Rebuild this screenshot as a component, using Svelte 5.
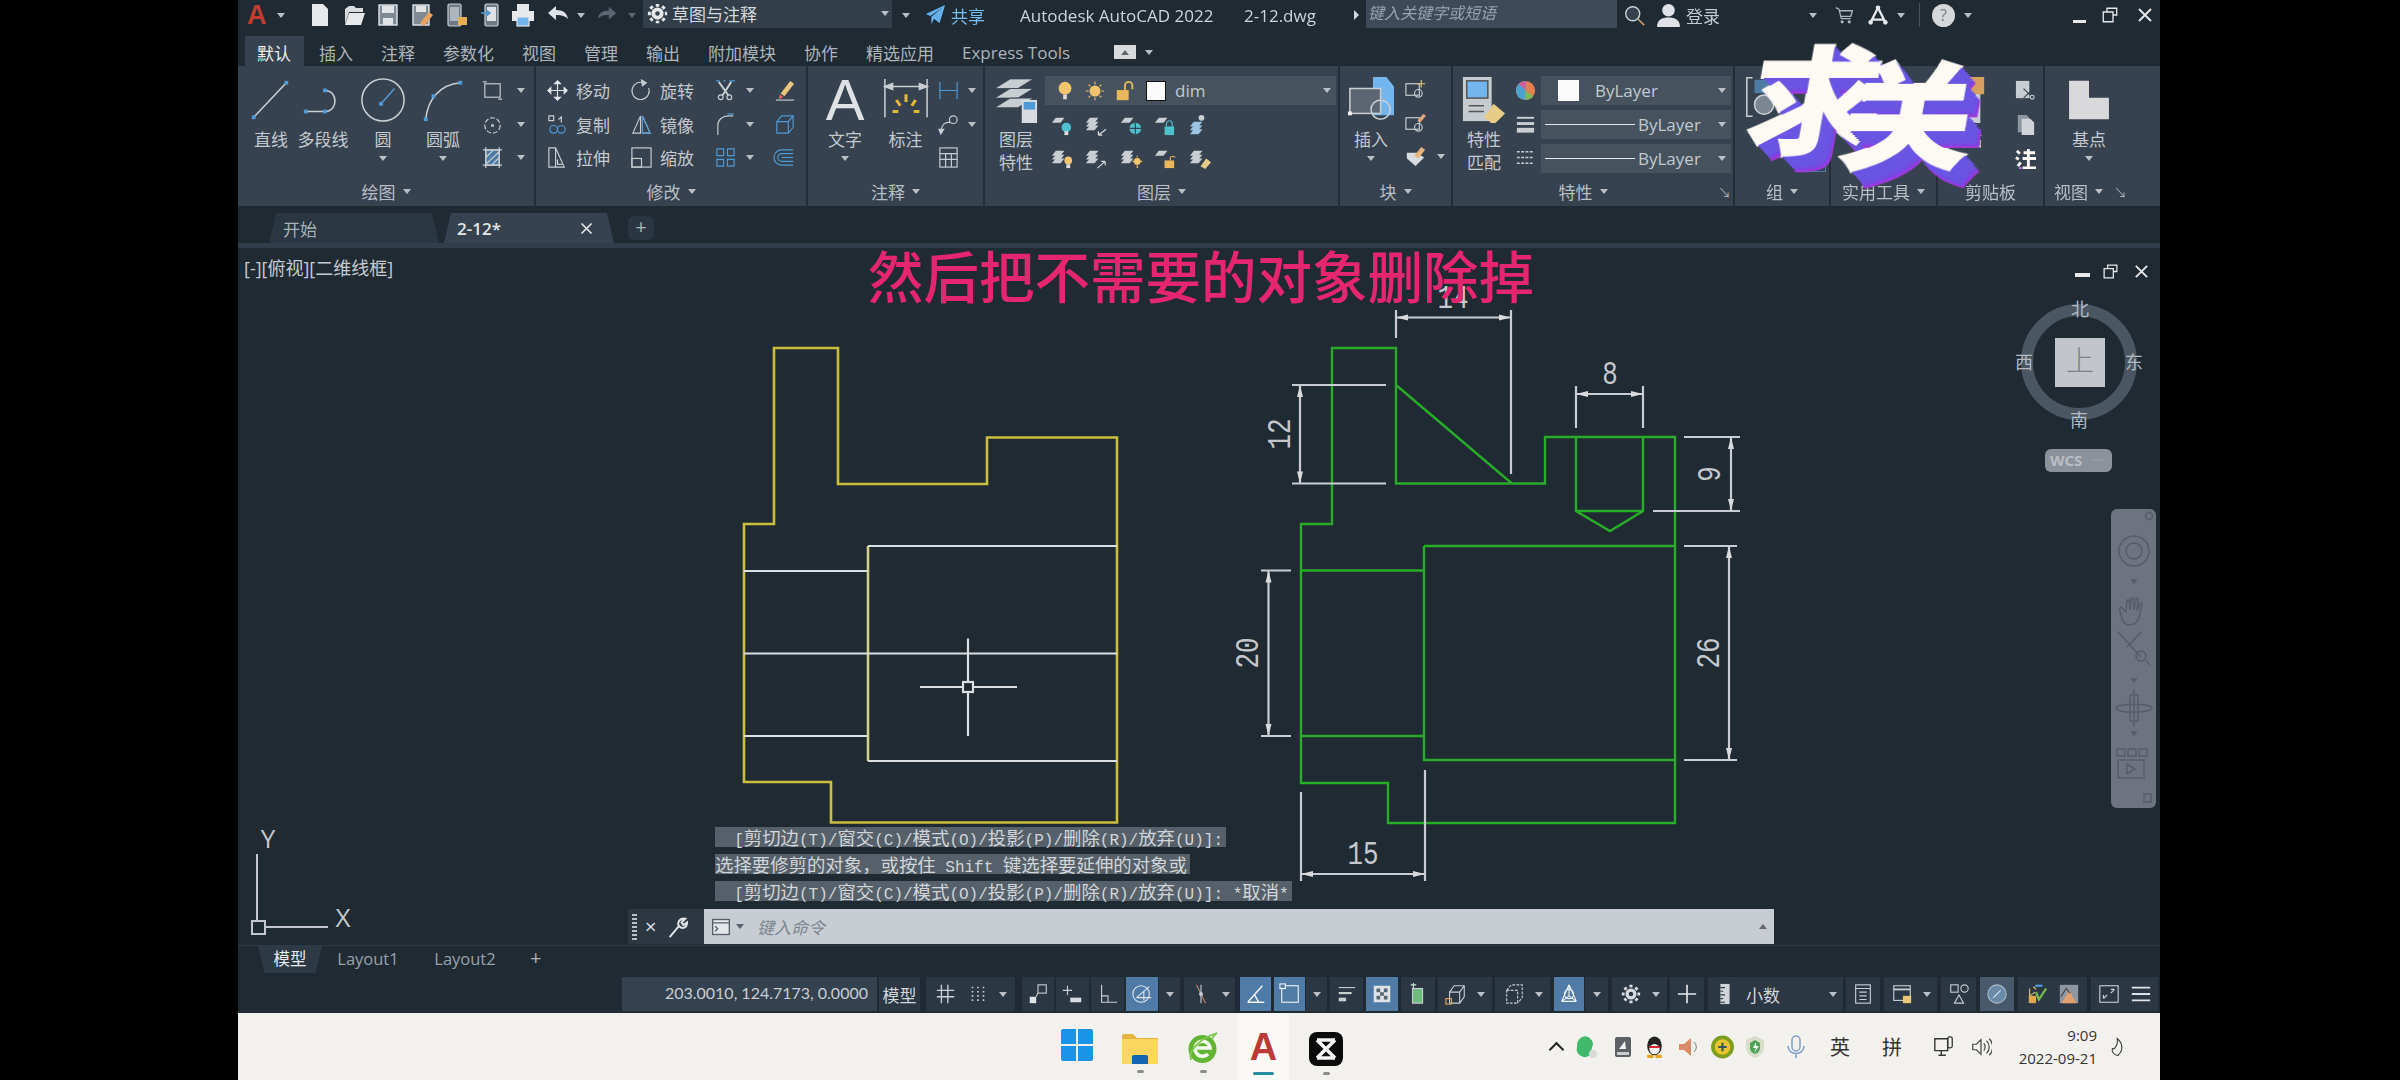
<script>
  const b = '#4e9ad6';
  const sq = (x, y) => `<rect x="${x - 1}" y="${y - 1}" width="2" height="2" fill="${b}" stroke="none"/>`;
  const plate = (y, f = '#c9ced3') => `<path d="M1 ${y + 5}l4-5h9l-4 5z" fill="${f}" stroke="none"/>`;
  const stack = plate(4) + plate(8) + plate(12);

  const icons = {
    line: `<path d="M3 21 20 3"/>` + sq(3, 21) + sq(20, 3),
    pline: `<path d="M3 18H13M13 7c7 0 7 11 0 11"/>` + sq(3, 18) + sq(13, 18) + sq(13, 7),
    circ: `<circle cx="12" cy="12" r="11"/><path d="M11 14 18 6" stroke="${b}"/>` + sq(11, 14),
    arc: `<path d="M3 22C4 12 10 4 21 3"/>` + sq(3, 22) + sq(7, 10) + sq(21, 3),
    rect: `<rect x="4" y="5" width="16" height="14"/><path d="M2 3h4M18 21h4"/>`,
    poly: `<circle cx="12" cy="13" r="8" stroke-dasharray="5 2"/><circle cx="12" cy="13" r="1"/>`,
    hatch: `<rect x="5" y="4" width="14" height="16" fill="#4e7ba3"/><path d="M5 12 13 4M5 19 19 6M11 20 19 12M2 4h20M2 20h20M5 1v22M19 1v22"/>`,
    move: `<path d="M12 2v20M2 12h20M12 2 9 5h6zM12 22l-3-3h6zM2 12l3-3v6zM22 12l-3-3v6z" stroke="#e4e7ea" fill="#e4e7ea"/>`,
    rotate: `<path d="M15 4a9 9 0 1 0 5 8" transform="rotate(-20 12 12)"/><path d="M12 1l5 3-4 3z" fill="#c9ced3"/>`,
    trim: `<path d="M5 3 15 17M18 3 9 17" stroke-width="2"/><circle cx="7" cy="19" r="2.5"/><circle cx="16" cy="19" r="2.5"/><path d="M2 2h4M10 2h2M16 2h6" stroke="${b}"/>`,
    erase: `<path d="M8 15 18 2l4 3-10 13z" fill="#e9c67a" stroke="none"/><path d="M7 16l4 3-5 2z" fill="#d66" stroke="none"/><path d="M3 22h19"/>`,
    copy: `<path d="M3 3h5v5H3zM13 7l3-3v6" /><circle cx="8" cy="17" r="4" stroke="${b}"/><circle cx="16" cy="17" r="4" stroke="${b}"/>`,
    mirror: `<path d="M11 3 3 21h8zM13 3v18h8z" /><path d="M13 3l8 18h-8z" stroke="${b}"/>`,
    fillet: `<path d="M4 23V13C4 7 9 3 15 3h5"/><path d="M14 1h7" stroke="${b}"/>`,
    box3d: `<path d="M4 9h12v12H4zM4 9l5-6h12v12l-5 6M16 9l5-6" stroke="${b}"/>`,
    stretch: `<path d="M3 2h7l9 20H3zM10 2v20"/><path d="M12 14v5h5" stroke="#e4e7ea"/>`,
    scale: `<rect x="2" y="2" width="20" height="20"/><rect x="2" y="13" width="10" height="9"/>`,
    array: `<path d="M3 3h7v7H3zM14 3h7v7h-7zM3 14h7v7H3zM14 14h7v7h-7z" stroke="${b}"/>`,
    offset: `<path d="M21 4H9a8 8 0 0 0 0 16h12M21 8H9a4 4 0 0 0 0 8h12" stroke="${b}"/><path d="M9 12h12" stroke="${b}"/>`,
    dimbig: `<path d="M1 1v20M23 1v20M1 5h22"/><path d="M1 5l4-1.5v3zM23 5l-4-1.5v3z" fill="#c9ced3"/><path d="M12 9v4M7 12l2 3M17 12l-2 3M5 18h3M16 18h3" stroke="#e2b93c" stroke-width="1.6"/>`,
    dimlin: `<path d="M3 3v18M21 3v18M3 12h18" stroke="${b}"/>`,
    leader: `<circle cx="17" cy="7" r="4"/><path d="M14 10C8 9 5 12 4 20"/><path d="M4 22l-2-5h5z" fill="#c9ced3"/>`,
    table: `<rect x="3" y="2" width="18" height="20"/><path d="M3 8h18M3 14h18M9 8v14M15 8v14"/>`,
    layprop: `<path d="M1 6 9 1h12l-8 5zM1 11 9 6h12l-8 5zM1 16l8-5h12l-8 5z" fill="#c9ced3" stroke="#36424f" stroke-width=".4"/><rect x="15" y="12" width="8" height="12" fill="#d8dce0" stroke="none"/><rect x="16" y="13" width="6" height="4" fill="${b}" stroke="none"/>`,
    bulb: `<circle cx="12" cy="9" r="7" fill="#f2c46d" stroke="none"/><rect x="10" y="16" width="4" height="5" fill="#ddd" stroke="none"/>`,
    sun: `<circle cx="12" cy="12" r="6" fill="#f2c46d" stroke="none"/><path d="M12 2v3M12 19v3M2 12h3M19 12h3M5 5l2 2M17 17l2 2M19 5l-2 2M7 17l-2 2" stroke="#f2c46d"/>`,
    lockopen: `<rect x="3" y="11" width="13" height="11" fill="#eab85c" stroke="none"/><path d="M12 11V6a4 4 0 0 1 8 0v4" stroke="#eab85c" stroke-width="2"/>`,
    l1: plate(4) + `<circle cx="16" cy="14" r="5" fill="#4fc0cf" stroke="none"/><rect x="14" y="18" width="4" height="4" fill="#ddd" stroke="none"/>`,
    l2: stack + `<path d="M22 16l-8 6M14 22h4M14 22v-4" stroke="#ddd"/>`,
    l3: plate(4) + `<circle cx="16" cy="15" r="6" fill="#4fc0cf" stroke="none"/><path d="M16 9v12M10 15h12" stroke="#36424f"/>`,
    l4: plate(4) + `<rect x="11" y="13" width="10" height="9" fill="#4fc0cf" stroke="none"/><path d="M13 13v-3a3 3 0 0 1 6 0v3" stroke="#4fc0cf"/>`,
    l5: `<circle cx="13" cy="4" r="3" fill="#c9ced3" stroke="none"/>` + plate(8, '#9cc3e4') + plate(12, '#9cc3e4') + plate(16, '#9cc3e4'),
    l6: stack + `<circle cx="18" cy="14" r="4" fill="#f2c46d" stroke="none"/><rect x="16" y="18" width="4" height="4" fill="#ddd" stroke="none"/>`,
    l7: stack + `<path d="M13 22l8-7M21 15h-4M21 15v4" stroke="#ddd"/>`,
    l8: stack + `<circle cx="18" cy="15" r="3.5" fill="#f2c46d" stroke="none"/><path d="M18 9v2M18 19v3M13 15h2M21 15h2" stroke="#f2c46d"/>`,
    l9: plate(4) + `<rect x="11" y="14" width="10" height="8" fill="#eab85c" stroke="none"/><path d="M17 14v-3a3 3 0 0 1 5 0" stroke="#eab85c"/>`,
    l10: stack + `<path d="M12 20l6-8 5 4-6 7z" fill="#e7cc85" stroke="none"/>`,
    insert: `<path d="M13 0h7l4 5v15h-11z" fill="#72b5ef" stroke="none"/><rect x="1" y="6" width="16" height="13" fill="#5b6672" stroke="#c9ced3"/><circle cx="17" cy="17" r="5" stroke="#c9ced3"/><rect x="0" y="18" width="2" height="2" fill="#eee" stroke="none"/>`,
    blockc: `<rect x="2" y="6" width="14" height="12"/><circle cx="15" cy="16" r="4"/><path d="M18 2v8M14 6h8" stroke="#e9c67a"/>`,
    blocke: `<rect x="2" y="6" width="14" height="12"/><circle cx="15" cy="16" r="4"/><path d="M14 9l6-7 3 2-6 7z" fill="#e9a37a" stroke="none"/>`,
    attr: `<path d="M3 8h10l8 5-9 9L3 14z" fill="#d8dce0" stroke="none"/><path d="M11 11l7-9 4 3-7 9z" fill="#e9b37a" stroke="none"/>`,
    match: `<rect x="1" y="0" width="15" height="23" fill="#c6cbd0" stroke="none"/><rect x="3" y="2" width="11" height="9" fill="#72b5ef" stroke="#555"/><path d="M4 15h8M4 18h8" stroke="#555"/><path d="M12 21l5-7 6 5-6 6z" fill="#e7cc85" stroke="none"/>`,
    wheel: `<circle cx="12" cy="12" r="10" fill="#e47f50" stroke="none"/><path d="M12 2a10 10 0 0 0 0 20z" fill="#4ba3d1" stroke="none"/><path d="M12 12 5 5a10 10 0 0 1 7-3z" fill="#d25d9a" stroke="none"/><path d="M12 12v10a10 10 0 0 0 8-4z" fill="#7dbb59" stroke="none"/>`,
    lw: `<path d="M3 5h18" stroke-width="2"/><path d="M3 11h18" stroke-width="3"/><path d="M3 18h18" stroke-width="5"/>`,
    lt: `<path d="M3 6h18M3 12h18M3 18h18" stroke-dasharray="3 1.5" stroke-width="1.6"/>`,
    bracket: `<path d="M5 2H2v20h3"/><rect x="6" y="3" width="12" height="7" fill="#4e7ba3" stroke="none"/><circle cx="11" cy="16" r="5" fill="#7b8691"/>`,
    cut: `<rect x="2" y="2" width="14" height="18" fill="#c9ced3" stroke="none"/><path d="M10 10 20 20M20 10 10 20" stroke="#36424f"/><circle cx="19" cy="19" r="2"/>`,
    docs: `<path d="M4 2h9l3 3v15H4z" fill="#8d97a1" stroke="none"/><path d="M8 6h9l4 4v13H8z" fill="#d0d4d8" stroke="none"/>`,
    fmt: `<path d="M3 5l3 3M2 12l3 2M4 21l3-4M10 7h12M9 13h14M15 3v20M9 23h14" stroke="#fbf7f2" stroke-width="3"/><path d="M5 23h3" stroke="#b56fe0" stroke-width="2"/>`,
    basept: `<path d="M2 0h13v11h13v14H2z" fill="#d9d9dc" stroke="none"/>`,
    paste: `<rect x="2" y="6" width="18" height="18" fill="#c9ced3" stroke="none"/><rect x="12" y="0" width="10" height="9" fill="#d7a05e" stroke="none"/>`,
    grid: `<path d="M7 2v20M14 2v20M2 8h19M2 15h19" stroke-width="1.5"/>`,
    dots: `<path d="M6 4v16M12 4v16M18 4v16" stroke-dasharray="1.8 2.8" stroke-width="1.8"/>`,
    snap: `<rect x="12" y="2" width="9" height="9"/><rect x="3" y="15" width="7" height="7" fill="#e0e3e6" stroke="none"/><path d="M12 11 10 15"/>`,
    plusb: `<path d="M6 3v10M1 8h10"/><rect x="9" y="16" width="12" height="5" fill="#d8dce0" stroke="none"/>`,
    ortho: `<path d="M5 2v19h17M5 14h7v7"/>`,
    polar: `<circle cx="11" cy="12" r="9" stroke="#dbe6f1"/><path d="M6 16 20 4M6 16h16M14 9v10" stroke="#dbe6f1"/>`,
    track: `<path d="M7 2 17 22" stroke="#c86"/><path d="M12 2v20"/><circle cx="12" cy="12" r="1.5" fill="#c9ced3"/>`,
    angle: `<path d="M3 21 19 3M3 21h18M10 12l5 9" stroke="#f0f3f6" stroke-width="1.6"/>`,
    osnap: `<rect x="3" y="3" width="18" height="18" stroke="#f0f3f6"/><rect x="1" y="1" width="6" height="5" fill="#4f7ba6" stroke="#f0f3f6"/>`,
    lwt: `<path d="M3 5h18" stroke-width="1.2"/><path d="M3 11h14" stroke-width="2.4"/><path d="M3 18h8" stroke-width="4"/>`,
    check: `<path d="M3 3h18v18H3z" fill="#dfe3e7" stroke="none"/><path d="M6 6h4v4H6zM14 6h4v4h-4zM10 10h4v4h-4zM6 14h4v4H6zM14 14h4v4h-4z" fill="#556472" stroke="none"/>`,
    selc: `<path d="M4 2h6M7 0v6" stroke="#ddd"/><rect x="6" y="6" width="11" height="16" fill="#6fbd7c" stroke="#c9ced3"/>`,
    box3: `<path d="M5 10h11v12H5zM5 10l5-7h11v12l-5 7M16 10l5-7"/><rect x="1" y="17" width="6" height="6" stroke="#e2a766"/>`,
    box4: `<path d="M4 8h12v14H4zM4 8l5-6h12v14l-5 6" stroke-dasharray="3 1.5"/>`,
    gizmo: `<path d="M12 2v12M12 14 4 20M12 14l8 6M4 20h16M12 2 4 20M12 2l8 18" stroke="#f0f3f6"/><circle cx="12" cy="12" r="5" stroke="#f0f3f6"/>`,
    gear: `<circle cx="12" cy="12" r="6" fill="#d9dde1" stroke="none"/><circle cx="12" cy="12" r="2.5" fill="#2b3743" stroke="none"/><path d="M12 2v20M2 12h20M5 5l14 14M19 5 5 19" stroke="#d9dde1" stroke-width="3.4" stroke-dasharray="3 14"/>`,
    plus: `<path d="M12 2v20M2 12h20" stroke="#e4e7ea" stroke-width="1.8"/>`,
    ruler: `<rect x="7" y="1" width="10" height="22" fill="#d0d4d8" stroke="none"/><path d="M7 5h5M7 9h3M7 13h5M7 17h3M7 21h5" stroke="#2b3743"/>`,
    docl: `<rect x="4" y="2" width="16" height="20"/><path d="M4 6h16M8 10h8M8 14h8M8 18h8"/>`,
    lockw: `<rect x="3" y="3" width="18" height="16"/><path d="M3 7h18" stroke-width="2"/><rect x="13" y="14" width="9" height="8" fill="#e9c67a" stroke="none"/>`,
    shapes: `<rect x="3" y="2" width="8" height="8"/><circle cx="18" cy="6" r="4"/><path d="M12 13l5 9H7z"/>`,
    dial: `<circle cx="12" cy="12" r="10" fill="#6b8aa7" stroke="#a9b9c8"/><path d="M8 16 16 8" stroke="#dbe6f1"/>`,
    ann1: `<path d="M4 6v8l6-4M8 4l3 3" stroke="#e9c67a"/><path d="M3 14h8v8H3z" fill="#e0a94e" stroke="none"/><path d="M11 10l3 8 8-12" stroke="#7dbb59" stroke-width="2.4"/><path d="M10 3h8" stroke="#4e9ad6" stroke-width="2.4"/>`,
    ann2: `<rect x="2" y="2" width="20" height="20" fill="#8d97a1" stroke="none"/><path d="M12 8l8 14H4z" fill="#e3a06f" stroke="none"/><path d="M3 15 9 6l4 5" stroke="#444"/>`,
    full: `<rect x="2" y="3" width="20" height="18"/><path d="M6 17l4-4M6 17v-4M14 11l4-4M18 7h-4" stroke-width="1.4"/>`,
    menu: `<path d="M2 5h20M2 12h20M2 19h20" stroke="#dfe3e7" stroke-width="2"/>`,
    newf: `<path d="M4 1h11l5 5v17H4z" fill="#e6e8ea" stroke="none"/>`,
    open: `<path d="M3 6l4-3h5l2 2h7v4H7L3 21z" fill="#d9dcdf" stroke="none"/><path d="M7 10h16l-4 12H3z" fill="#e6e8ea" stroke="none"/>`,
    save: `<rect x="3" y="2" width="18" height="20" fill="#7f8a94" stroke="#e2e5e8" stroke-width="1.4"/><rect x="6" y="3" width="12" height="7" fill="#e2e5e8" stroke="none"/><rect x="7" y="15" width="10" height="7" fill="#e2e5e8" stroke="none"/>`,
    saveas: `<rect x="3" y="2" width="16" height="20" fill="#7f8a94" stroke="#e2e5e8" stroke-width="1.4"/><rect x="6" y="3" width="10" height="6" fill="#e2e5e8" stroke="none"/><path d="M10 20l9-11 4 3-9 11z" fill="#e9a35e" stroke="none"/>`,
    phone1: `<rect x="3" y="1" width="13" height="22" rx="1.5" fill="#6f7a84" stroke="#c9ced3"/><rect x="5" y="4" width="9" height="14" fill="#aeb5bb" stroke="none"/><path d="M13 14h9v8h-9z" fill="#e6b04f" stroke="none"/>`,
    phone2: `<rect x="7" y="1" width="13" height="22" rx="1.5" fill="#6f7a84" stroke="#c9ced3"/><rect x="9" y="4" width="9" height="14" fill="#dfe3e7" stroke="none"/><path d="M3 10h8M8 7l4 3-4 3" stroke="${b}" stroke-width="1.6"/>`,
    print: `<rect x="6" y="1" width="12" height="7" fill="#e6e8ea" stroke="none"/><rect x="1" y="8" width="22" height="10" fill="#e6e8ea" stroke="none"/><rect x="6" y="14" width="12" height="9" fill="#72b5ef" stroke="#e6e8ea"/>`,
    undo: `<path d="M2 10l8-7v4c7 0 11 3 12 9-3-3-6-4-12-4v5z" fill="#dfe3e7" stroke="none"/>`,
    redo: `<path d="M22 10l-8-7v4C7 7 3 10 2 16c3-3 6-4 12-4v5z" fill="#5a6570" stroke="none"/>`,
    share: `<path d="M2 11 23 1 17 21l-6-5-3 6V14L20 4 7 13z" fill="#64b1ea" stroke="none"/>`,
    search: `<circle cx="10" cy="10" r="8" stroke="#c9ced3" stroke-width="1.6" fill="#35424e"/><path d="M16 16l7 7" stroke="#c89a6b" stroke-width="2"/>`,
    user: `<circle cx="12" cy="7" r="6" fill="#dfe3e7" stroke="none"/><path d="M1 23c0-7 5-9 11-9s11 2 11 9z" fill="#dfe3e7" stroke="none"/>`,
    cart: `<path d="M1 2l4 2 3 12h12M6 6h16l-2 7H8" stroke="#aeb5bb" stroke-width="1.6"/><circle cx="9" cy="20" r="2" fill="#aeb5bb" stroke="none"/><circle cx="18" cy="20" r="2" fill="#aeb5bb" stroke="none"/>`,
    a360: `<path d="M12 4 4 20M12 4l8 16M5 17h14" stroke="#e4e7ea" stroke-width="2.6"/><circle cx="12" cy="4" r="2.5" fill="#e4e7ea" stroke="none"/><circle cx="4" cy="20" r="2.5" fill="#e4e7ea" stroke="none"/><circle cx="20" cy="20" r="2.5" fill="#e4e7ea" stroke="none"/>`,
    gearw: `<circle cx="12" cy="12" r="7" fill="#e6e8ea" stroke="none"/><circle cx="12" cy="12" r="2.6" fill="#3a4652" stroke="none"/><path d="M12 1v22M1 12h22M4 4l16 16M20 4 4 20" stroke="#e6e8ea" stroke-width="4" stroke-dasharray="3.4 16"/>`,
    wincross: `<path d="M4 4 20 20M20 4 4 20" stroke="#e6e8ea" stroke-width="2.6"/>`,
    winrest: `<path d="M8 8V3h13v9h-5M3 8h13v13H3z" stroke="#e6e8ea" stroke-width="1.8"/>`
  };

  const place = (list, from) => {
    let p = from;
    return list.map((it) => {
      const m = it.x - p;
      p = it.x + it.w;
      return { ...it, m };
    });
  };

  const qat = place([
    { x: 308, w: 24, i: 'newf' }, { x: 342, w: 24, i: 'open' }, { x: 376, w: 24, i: 'save' },
    { x: 410, w: 24, i: 'saveas' }, { x: 445, w: 24, i: 'phone1' }, { x: 478, w: 24, i: 'phone2' },
    { x: 511, w: 24, i: 'print' }, { x: 546, w: 24, i: 'undo' }, { x: 577, w: 8 },
    { x: 596, w: 22, i: 'redo' }, { x: 628, w: 8, dim: true }
  ], 285);

  const ribbonTabs = ['默认', '插入', '注释', '参数化', '视图', '管理', '输出', '附加模块', '协作', '精选应用', 'Express Tools'];

  const modify = [
    ['move', '移动'], ['rotate', '旋转'], ['trim', '', true], ['erase', ''],
    ['copy', '复制'], ['mirror', '镜像'], ['fillet', '', true], ['box3d', ''],
    ['stretch', '拉伸'], ['scale', '缩放'], ['array', '', true], ['offset', '']
  ];
  const layerRows = ['l1', 'l2', 'l3', 'l4', 'l5', 'l6', 'l7', 'l8', 'l9', 'l10'];

  const status = place([
    { x: 879, w: 41, t: '模型' }, { x: 926, w: 89, ic: ['grid', 'dots'], c: 1 },
    { x: 1022, w: 32, ic: ['snap'] }, { x: 1056, w: 33, ic: ['plusb'] }, { x: 1091, w: 33, ic: ['ortho'] },
    { x: 1126, w: 32, ic: ['polar'], on: 1 }, { x: 1159, w: 21, c: 1 }, { x: 1184, w: 51, ic: ['track'], c: 1 },
    { x: 1240, w: 31, ic: ['angle'], on: 1 }, { x: 1274, w: 31, ic: ['osnap'], on: 1 }, { x: 1306, w: 21, c: 1 },
    { x: 1330, w: 33, ic: ['lwt'] }, { x: 1366, w: 32, ic: ['check'], on: 1 }, { x: 1401, w: 34, ic: ['selc'] },
    { x: 1438, w: 54, ic: ['box3'], c: 1 }, { x: 1495, w: 55, ic: ['box4'], c: 1 },
    { x: 1554, w: 30, ic: ['gizmo'], on: 1 }, { x: 1585, w: 23, c: 1 }, { x: 1612, w: 55, ic: ['gear'], c: 1 },
    { x: 1670, w: 34, ic: ['plus'] }, { x: 1708, w: 135, ic: ['ruler'], t: '小数', c: 1, wide: 1 },
    { x: 1846, w: 34, ic: ['docl'] }, { x: 1884, w: 53, ic: ['lockw'], c: 1 }, { x: 1941, w: 35, ic: ['shapes'] },
    { x: 1980, w: 34, ic: ['dial'], dimon: 1 }, { x: 2018, w: 69, ic: ['ann1', 'ann2'] }, { x: 2091, w: 67, ic: ['full', 'menu'] }
  ], 877);

  // right-hand view: dimension geometry in screen coordinates
  const dimLines = [
    'M1396 310V338M1511 310V474M1396 317.5H1511',
    'M1292 385H1386M1292 483.5H1386M1300 385V483.5',
    'M1261 570.5H1291M1261 736H1291M1268.5 570.5V736',
    'M1576 386V428M1643 386V428M1576 394H1643',
    'M1684 437H1740M1653 511H1740M1731 437V511',
    'M1684 546H1737M1684 760H1737M1729 546V760',
    'M1301 792V881M1425 770V881M1301 874H1425'
  ];
  const arrow = (x, y, dx, dy) =>
    `${x},${y} ${x + dx * 12 + dy * 3},${y + dy * 12 + dx * 3} ${x + dx * 12 - dy * 3},${y + dy * 12 - dx * 3}`;
  const arrows = [
    [1396, 317.5, 1, 0], [1511, 317.5, -1, 0], [1300, 385, 0, 1], [1300, 483.5, 0, -1],
    [1268.5, 570.5, 0, 1], [1268.5, 736, 0, -1], [1576, 394, 1, 0], [1643, 394, -1, 0],
    [1731, 437, 0, 1], [1731, 511, 0, -1], [1729, 546, 0, 1], [1729, 760, 0, -1],
    [1301, 874, 1, 0], [1425, 874, -1, 0]
  ];
  const dimTexts = [
    { t: '14', x: 1453, y: 299 }, { t: '12', x: 1281, y: 434, r: 1 }, { t: '20', x: 1249, y: 653, r: 1 },
    { t: '8', x: 1610, y: 375 }, { t: '9', x: 1711, y: 474, r: 1 }, { t: '26', x: 1710, y: 653, r: 1 },
    { t: '15', x: 1363, y: 855 }
  ];

  const cut = '[剪切边(T)/窗交(C)/模式(O)/投影(P)/删除(R)/放弃(U)]:';
  const history = ['  ' + cut, '选择要修剪的对象，或按住 Shift 键选择要延伸的对象或', '  ' + cut + ' *取消*'];
  const parts = (s) => s.split(/([\x00-\x7f]+)/).filter(Boolean).map((t) => ({ t, a: /^[\x00-\x7f]/.test(t) }));

  const tray = place([
    { x: 1575, w: 24, i: 'wechat' }, { x: 1612, w: 24, i: 'app' }, { x: 1643, w: 25, i: 'qq' },
    { x: 1677, w: 24, i: 'spk' }, { x: 1711, w: 25, i: 'plusg' }, { x: 1744, w: 24, i: 'shield' }, { x: 1785, w: 24, i: 'mic' }
  ], 1563);
  const trayIcons = {
    wechat: `<path d="M3 12a8 9 0 0 1 16-3l-3 11a8 8 0 0 1-13-8z" fill="#3fb96c"/><circle cx="19" cy="19" r="4" fill="#d8dcd8"/>`,
    app: `<rect x="4" y="2" width="16" height="20" rx="2" fill="#5b6066"/><path d="M8 14l6-8 1 8z" fill="#eee"/><rect x="6" y="17" width="12" height="3" fill="#ccc"/>`,
    qq: `<ellipse cx="12" cy="11" rx="7" ry="9" fill="#222"/><ellipse cx="12" cy="14" rx="5" ry="5" fill="#f5f5f5"/><path d="M5 21h6M13 21h6" stroke="#e5a321" stroke-width="3"/><path d="M7 12h10" stroke="#d23" stroke-width="2"/>`,
    spk: `<path d="M3 9h5l7-6v18l-7-6H3z" fill="#d98a6a"/><path d="M18 7c3 3 3 7 0 10" stroke="#777" fill="none"/>`,
    plusg: `<circle cx="12" cy="12" r="11" fill="#7d9e1d"/><circle cx="12" cy="12" r="7.5" fill="#e8c52f"/><path d="M12 8v8M8 12h8" stroke="#356" stroke-width="2"/>`,
    shield: `<path d="M12 1l9 4v7c0 6-4 9-9 11-5-2-9-5-9-11V5z" fill="#d7ddc9"/><path d="M12 5l5 3v4c0 4-2 6-5 7-3-1-5-3-5-7V8z" fill="#4fa257"/><path d="M13 7l-3 6h3l-2 5 5-7h-3z" fill="#f2f2f2"/>`,
    mic: `<rect x="8" y="1" width="8" height="15" rx="4" fill="none" stroke="#7e9fc7" stroke-width="1.5"/><path d="M4 11c0 10 16 10 16 0M12 19v4" fill="none" stroke="#7e9fc7" stroke-width="1.5"/>`
  };
</script>

<div class="screen">
  <div class="app">
    <header class="titlebar">
      <span class="logo">A</span>
      <i class="car logocar"></i>
      {#each qat as q}
        {#if q.i}
          <svg class="ic q" viewBox="0 0 24 24" style="margin-left:{q.m}px;width:{q.w}px">{@html icons[q.i]}</svg>
        {:else}
          <i class="car" class:dim={q.dim} style="margin-left:{q.m}px"></i>
        {/if}
      {/each}
      <div class="workspace">
        <svg class="ic" viewBox="0 0 24 24">{@html icons.gearw}</svg>
        <span>草图与注释</span>
        <i class="car push"></i>
      </div>
      <i class="car tiny"></i>
      <svg class="ic share" viewBox="0 0 24 24">{@html icons.share}</svg>
      <span class="sharet">共享</span>
      <span class="apptitle">Autodesk AutoCAD 2022</span>
      <span class="docname">2-12.dwg</span>
      <i class="car right"></i>
      <div class="searchbox">键入关键字或短语</div>
      <svg class="ic srch" viewBox="0 0 24 24">{@html icons.search}</svg>
      <svg class="ic usr" viewBox="0 0 24 24">{@html icons.user}</svg>
      <span class="login">登录</span>
      <i class="car c1"></i>
      <svg class="ic cart" viewBox="0 0 24 24">{@html icons.cart}</svg>
      <svg class="ic a360" viewBox="0 0 24 24">{@html icons.a360}</svg>
      <i class="car c2"></i>
      <span class="vsep"></span>
      <span class="help">?</span>
      <i class="car c3"></i>
      <span class="minbtn"></span>
      <svg class="ic restore" viewBox="0 0 24 24">{@html icons.winrest}</svg>
      <svg class="ic closex" viewBox="0 0 24 24">{@html icons.wincross}</svg>
    </header>

    <nav class="ribbontabs">
      {#each ribbonTabs as t, i}
        <span class="rt" class:active={i === 0}>{t}</span>
      {/each}
      <span class="rtbox"><i class="car up"></i></span>
      <i class="car rtcar"></i>
    </nav>

    <div class="ribbon">
      <section class="panel p-draw">
        <div class="body draw">
          <div class="big"><svg class="ic lg" viewBox="0 0 24 24">{@html icons.line}</svg><span>直线</span></div>
          <div class="big"><svg class="ic lg" viewBox="0 0 24 24">{@html icons.pline}</svg><span>多段线</span></div>
          <div class="big"><svg class="ic lg" viewBox="0 0 24 24">{@html icons.circ}</svg><span>圆</span><i class="car"></i></div>
          <div class="big"><svg class="ic lg" viewBox="0 0 24 24">{@html icons.arc}</svg><span>圆弧</span><i class="car"></i></div>
          <div class="smalls">
            {#each ['rect', 'poly', 'hatch'] as n}
              <div class="row"><svg class="ic sm" viewBox="0 0 24 24">{@html icons[n]}</svg><i class="car"></i></div>
            {/each}
          </div>
        </div>
        <footer class="ptitle">绘图<i class="car"></i></footer>
      </section>

      <section class="panel p-mod">
        <div class="body mod">
          {#each modify as [n, label, c]}
            <div class="row">
              <svg class="ic sm" viewBox="0 0 24 24">{@html icons[n]}</svg>
              {#if label}<span>{label}</span>{/if}
              {#if c}<i class="car"></i>{/if}
            </div>
          {/each}
        </div>
        <footer class="ptitle">修改<i class="car"></i></footer>
      </section>

      <section class="panel p-ann">
        <div class="body ann">
          <div class="big"><span class="bigA">A</span><span>文字</span><i class="car"></i></div>
          <div class="big"><svg class="ic lg" viewBox="0 0 24 24">{@html icons.dimbig}</svg><span>标注</span></div>
          <div class="smalls">
            <div class="row"><svg class="ic sm" viewBox="0 0 24 24">{@html icons.dimlin}</svg><i class="car"></i></div>
            <div class="row"><svg class="ic sm" viewBox="0 0 24 24">{@html icons.leader}</svg><i class="car"></i></div>
            <div class="row"><svg class="ic sm" viewBox="0 0 24 24">{@html icons.table}</svg></div>
          </div>
        </div>
        <footer class="ptitle">注释<i class="car"></i></footer>
      </section>

      <section class="panel p-lay">
        <div class="body lay">
          <div class="big"><svg class="ic lg" viewBox="0 0 24 24">{@html icons.layprop}</svg><span class="two">图层<br />特性</span></div>
          <div class="laycol">
            <div class="drop layerdrop">
              <svg class="ic d" viewBox="0 0 24 24">{@html icons.bulb}</svg>
              <svg class="ic d" viewBox="0 0 24 24">{@html icons.sun}</svg>
              <svg class="ic d" viewBox="0 0 24 24">{@html icons.lockopen}</svg>
              <span class="swatch"></span>
              <span class="dimname">dim</span>
              <i class="car push"></i>
            </div>
            <div class="laygrid">
              {#each layerRows as n}
                <svg class="ic sm" viewBox="0 0 24 24">{@html icons[n]}</svg>
              {/each}
            </div>
          </div>
        </div>
        <footer class="ptitle">图层<i class="car"></i></footer>
      </section>

      <section class="panel p-blk">
        <div class="body blk">
          <div class="big"><svg class="ic lg" viewBox="0 0 24 24">{@html icons.insert}</svg><span>插入</span><i class="car"></i></div>
          <div class="smalls">
            <div class="row"><svg class="ic sm" viewBox="0 0 24 24">{@html icons.blockc}</svg></div>
            <div class="row"><svg class="ic sm" viewBox="0 0 24 24">{@html icons.blocke}</svg></div>
            <div class="row"><svg class="ic sm" viewBox="0 0 24 24">{@html icons.attr}</svg><i class="car"></i></div>
          </div>
        </div>
        <footer class="ptitle">块<i class="car"></i></footer>
      </section>

      <section class="panel p-prop">
        <div class="body prop">
          <div class="big"><svg class="ic lg" viewBox="0 0 24 24">{@html icons.match}</svg><span class="two">特性<br />匹配</span></div>
          <div class="smalls">
            {#each ['wheel', 'lw', 'lt'] as n}
              <div class="row"><svg class="ic sm" viewBox="0 0 24 24">{@html icons[n]}</svg></div>
            {/each}
          </div>
          <div class="propcol">
            <div class="drop"><span class="swatch big-sw"></span><span class="bl">ByLayer</span><i class="car push"></i></div>
            <div class="drop"><span class="lineprev"></span><span>ByLayer</span><i class="car push"></i></div>
            <div class="drop"><span class="lineprev"></span><span>ByLayer</span><i class="car push"></i></div>
          </div>
        </div>
        <footer class="ptitle spread">特性<i class="car"></i><span class="corner">↘</span></footer>
      </section>

      <section class="panel p-grp">
        <div class="body grp">
          <svg class="ic lg grpic" viewBox="0 0 24 24">{@html icons.bracket}</svg>
          <span class="grpbox"></span>
        </div>
        <footer class="ptitle">组<i class="car"></i></footer>
      </section>

      <section class="panel p-utl">
        <div class="body"></div>
        <footer class="ptitle">实用工具<i class="car"></i></footer>
      </section>

      <section class="panel p-clip">
        <div class="body clip">
          <div class="big"><svg class="ic lg" viewBox="0 0 24 24">{@html icons.paste}</svg><span>粘贴</span></div>
          <div class="smalls">
            <div class="row"><svg class="ic sm" viewBox="0 0 24 24">{@html icons.cut}</svg></div>
            <div class="row"><svg class="ic sm" viewBox="0 0 24 24">{@html icons.docs}</svg></div>
            <div class="row"><svg class="ic sm" viewBox="0 0 24 24">{@html icons.fmt}</svg></div>
          </div>
        </div>
        <footer class="ptitle">剪贴板</footer>
      </section>

      <section class="panel p-view">
        <div class="body vw">
          <div class="big"><svg class="ic lg base" viewBox="0 0 30 25">{@html icons.basept}</svg><span>基点</span><i class="car"></i></div>
        </div>
        <footer class="ptitle">视图<i class="car"></i><span class="corner">↘</span></footer>
      </section>
    </div>

    <div class="doctabs">
      <span class="dt">开始</span>
      <span class="dt cur"><b>2-12*</b><svg class="ic dtx" viewBox="0 0 24 24">{@html icons.wincross}</svg></span>
      <span class="dtplus">+</span>
    </div>
    <div class="strip"></div>

    <main class="view">
      <svg class="canvas" viewBox="238 248 1922 697" width="1922" height="697">
        <g class="yel">
          <path d="M774 348H838V484H987V437.5H1117V822.5H831V782H744V524H774Z" />
          <path d="M868 546V761" class="paley" />
        </g>
        <path class="wht" d="M868 546H1117M744 571H868M744 653.5H1117M744 736H868M868 761H1117" />
        <path class="cross" d="M968 638.5V682M968 692V736M920 687H963M973 687H1017" />
        <rect class="cross" x="963" y="682" width="10" height="10" />

        <g class="grn">
          <path d="M1332 348H1396V483.5H1545V437H1675V823H1388V783H1301V524H1332Z" />
          <path d="M1396 385 1512 483.5M1576 437V511L1610 531 1643 511V437M1576 511H1643" />
          <path d="M1424 546H1675M1424 546V760H1675M1301 570.5H1424M1301 736H1424" />
        </g>
        <g class="dims">
          {#each dimLines as d}<path {d} />{/each}
          {#each arrows as a}<polygon points={arrow(a[0], a[1], a[2], a[3])} />{/each}
          {#each dimTexts as t}
            <text x={t.x} y={t.y} textLength={t.t.length * 15.5} lengthAdjust="spacingAndGlyphs"
              transform={t.r ? `rotate(-90 ${t.x} ${t.y})` : undefined}>{t.t}</text>
          {/each}
        </g>

        <g class="ucs">
          <path d="M257 854V920M265 927H328" />
          <rect x="252" y="921" width="13" height="13" />
          <text x="268" y="848">Y</text>
          <text x="343" y="927">X</text>
        </g>

        <circle class="ring" cx="2079" cy="362" r="52" />
        <rect class="cube" x="2055" y="338" width="50" height="49" />
        <g class="cardinal">
          <text x="2080" y="316">北</text>
          <text x="2079" y="427">南</text>
          <text x="2024" y="369">西</text>
          <text x="2134" y="369">东</text>
          <text class="top" x="2080" y="371">上</text>
        </g>
        <rect class="wcs" x="2045" y="449" width="67" height="23" rx="6" />
        <text class="wcst" x="2050" y="466">WCS</text>
        <path class="wcsd" d="M2093 460H2104" />

        <g transform="translate(2111 509)">
          <rect class="navbg" width="45" height="299" rx="6" />
          <g class="navic">
            <circle cx="38" cy="7" r="3.5" />
            <circle cx="23" cy="42" r="15" />
            <circle cx="23" cy="42" r="8" />
            <path d="M21 71h4l-2 3zM21 170h4l-2 3zM21 223h4l-2 3z" />
            <path d="M10 104c-2-4-2-5 0-6l5 5 1-12 2 0 1 10 1-12 2 0 1 12 2-12 2 1-1 12 3-8 2 1-3 14c-2 6-6 7-11 7-4 0-6-5-8-12z" />
            <path d="M7 123 30 148M30 123 16 138" />
            <circle cx="30" cy="147" r="5" />
            <path d="M35 152l4 4" />
            <path d="M23 180v38M19 186h8v26h-8zM5 199c0-5 36-5 36 0s-36 6-36 0z" />
            <path d="M6 240h8v7H6zM17 240h8v7h-8zM28 240h8v7h-8zM7 251h26v18H7zM16 255l8 5-8 5z" />
            <rect x="33" y="285" width="7" height="8" />
          </g>
        </g>
      </svg>

      <div class="viewlabel">[-][俯视][二维线框]</div>
      <h1 class="caption">然后把不需要的对象删除掉</h1>
      <div class="viewbtns">
        <span class="vmin"></span>
        <svg class="ic vres" viewBox="0 0 24 24">{@html icons.winrest}</svg>
        <svg class="ic vx" viewBox="0 0 24 24">{@html icons.wincross}</svg>
      </div>

      <div class="history">
        {#each history as line}
          <div class="hline">{#each parts(line) as p}<span class:a={p.a}>{p.t}</span>{/each}</div>
        {/each}
      </div>
      <div class="cmd">
        <div class="cmdtools">
          <span class="grip"></span>
          <span class="cmdx">×</span>
          <svg class="ic wr" viewBox="0 0 24 24"><path d="M4 23 15 10M14 11c-2-4 1-9 7-8l-4 4 2 3 4-3c0 6-5 8-9 4" stroke="#dfe3e7" stroke-width="2.2" /></svg>
        </div>
        <div class="cmdinput">
          <svg class="ic pr" viewBox="0 0 24 24"><rect x="2" y="3" width="20" height="18" fill="#e5e8eb" stroke="#56616c" stroke-width="1.6" /><path d="M2 7h20M5 11l3 3-3 3" stroke="#56616c" stroke-width="1.6" /></svg>
          <i class="car cmdcar"></i>
          <span>键入命令</span>
          <i class="car up endcar"></i>
        </div>
      </div>
    </main>

    <div class="layouttabs">
      <span class="lt on">模型</span>
      <span class="lt">Layout1</span>
      <span class="lt">Layout2</span>
      <span class="ltplus">+</span>
    </div>

    <div class="status">
      <span class="coords">203.0010, 124.7173, 0.0000</span>
      {#each status as s}
        <span class="seg" class:on={s.on} class:dimon={s.dimon} class:wide={s.wide} style="margin-left:{s.m}px;width:{s.w}px">
          {#if s.ic}
            {#each s.ic as n}<svg class="ic st" viewBox="0 0 24 24">{@html icons[n]}</svg>{/each}
          {/if}
          {#if s.t}<span>{s.t}</span>{/if}
          {#if s.c}<i class="car" class:push={s.wide}></i>{/if}
        </span>
      {/each}
    </div>

    <footer class="taskbar">
      <svg class="tb win" viewBox="0 0 32 32">
        <path d="M0 2a2 2 0 0 1 2-2h13v15H0zM17 0h13a2 2 0 0 1 2 2v13H17zM0 17h15v15H2a2 2 0 0 1-2-2zM17 17h15v13a2 2 0 0 1-2 2H17z" fill="#1b93e6" />
      </svg>
      <div class="tbitem fold">
        <svg class="tb" viewBox="0 0 36 32" width="36" height="32">
          <path d="M0 4a2 2 0 0 1 2-2h9l4 4h21v26H0z" fill="#e6b33d" />
          <rect y="7" width="36" height="25" rx="1" fill="#fbd75f" />
          <path d="M10 32v-7a2 2 0 0 1 2-2h12a2 2 0 0 1 2 2v7z" fill="#1565b5" />
        </svg>
        <i class="dot"></i>
      </div>
      <div class="tbitem edge">
        <svg class="tb" viewBox="0 0 32 32" width="32" height="32">
          <circle cx="15.5" cy="17" r="14" fill="#63b534" />
          <path d="M8 16h15a7.5 7.5 0 1 0-2 6" fill="none" stroke="#f3f8ee" stroke-width="3.6" />
          <path d="M4 28C0 18 16 5 30 1c-3 2-4 3-5 6" fill="none" stroke="#7fc74e" stroke-width="1.8" />
        </svg>
        <i class="dot"></i>
      </div>
      <div class="tbitem acad">
        <span class="acadA">A</span>
        <i class="bar"></i>
      </div>
      <div class="tbitem cap">
        <svg class="tb" viewBox="0 0 34 34" width="34" height="34">
          <rect width="34" height="34" rx="8" fill="#0a0a0a" />
          <path d="M8 8h18M8 26h18M8 8 26 26M26 8 8 26" fill="none" stroke="#f4f4f4" stroke-width="3.6" stroke-linejoin="round" />
        </svg>
        <i class="dot"></i>
      </div>
      <span class="trayup"></span>
      {#each tray as t}
        <svg class="tr" viewBox="0 0 24 24" style="margin-left:{t.m}px;width:{t.w}px">{@html trayIcons[t.i]}</svg>
      {/each}
      <span class="ime en">英</span>
      <span class="ime py">拼</span>
      <svg class="tr net" viewBox="0 0 24 24"><path d="M2 3h14v13H2zM6 21h8M9 16v5" fill="none" stroke="#333" stroke-width="1.5" /><rect x="16" y="1" width="5" height="12" rx="2" fill="none" stroke="#333" stroke-width="1.4" /></svg>
      <svg class="tr vol" viewBox="0 0 24 24"><path d="M3 9h4l5-5v16l-5-5H3zM15 8c2 2 2 6 0 8M18 5c4 4 4 10 0 14M21 3c5 5 5 13 0 18" fill="none" stroke="#444" stroke-width="1.3" /></svg>
      <div class="clock"><span>9:09</span><span>2022-09-21</span></div>
      <svg class="tr moon" viewBox="0 0 24 24"><path d="M10 2c6 5 8 13 1 20-5 0-8-4-7-8 3 1 7-5 6-12z" fill="none" stroke="#333" stroke-width="1.3" /></svg>
    </footer>

    <div class="sticker" aria-hidden="true"><span>求</span><span>关</span></div>
  </div>
</div>

<style>
  :global(body) {
    margin: 0;
    background: #000;
  }

  .screen {
    width: 2400px;
    height: 1080px;
    background: #000;
    overflow: hidden;
  }

  .app {
    position: relative;
    width: 1922px;
    height: 1080px;
    margin-left: 238px;
    display: flex;
    flex-direction: column;
    background: #1f2a33;
    color: #c3c9ce;
    font-family: 'Open Sans', 'Noto Sans CJK SC', sans-serif;
    font-size: 17px;
    filter: blur(0.5px);
  }

  .ic {
    fill: none;
    stroke: #c9ced3;
    stroke-width: 1.2;
    flex: none;
  }
  .lg {
    width: 46px;
    height: 46px;
    stroke-width: 0.8;
  }
  .sm {
    width: 23px;
    height: 23px;
  }

  .car {
    flex: none;
    display: inline-block;
    width: 0;
    height: 0;
    border-left: 4px solid transparent;
    border-right: 4px solid transparent;
    border-top: 5px solid #b9bfc5;
  }
  .car.dim {
    border-top-color: #5a6570;
  }
  .car.up {
    border-top: 0;
    border-bottom: 5px solid #666;
  }
  .push {
    margin-left: auto;
  }

  /* title bar */
  .titlebar {
    height: 36px;
    display: flex;
    align-items: center;
    padding-bottom: 6px;
    box-sizing: border-box;
    flex: none;
  }
  .logo {
    margin-left: 9px;
    width: 20px;
    font: bold 27px 'Liberation Sans', sans-serif;
    color: #c53b30;
  }
  .logocar {
    margin-left: 10px;
  }
  .q {
    height: 24px;
  }
  .workspace {
    margin-left: 7px;
    width: 249px;
    height: 30px;
    margin-top: -4px;
    background: #323e4a;
    display: flex;
    align-items: center;
    box-sizing: border-box;
    padding: 0 3px 0 4px;
    color: #d5d9dd;
    flex: none;
  }
  .workspace svg {
    width: 21px;
    height: 21px;
    margin-right: 4px;
  }
  .tiny {
    margin-left: 10px;
  }
  .share {
    width: 22px;
    height: 22px;
    margin-left: 14px;
  }
  .sharet {
    margin-left: 5px;
    color: #79bdf0;
    width: 36px;
  }
  .apptitle {
    margin-left: 33px;
    width: 224px;
    color: #cfd3d7;
    font-size: 17px;
    white-space: nowrap;
  }
  .docname {
    color: #cfd3d7;
    width: 75px;
  }
  .right {
    margin-left: 35px;
    border: 0;
    border-top: 5px solid transparent;
    border-bottom: 5px solid transparent;
    border-left: 5px solid #d5d9dd;
  }
  .searchbox {
    margin-left: 7px;
    width: 251px;
    height: 30px;
    margin-top: -4px;
    line-height: 30px;
    background: #3c4a5a;
    font-size: 16px;
    font-style: italic;
    color: #98a2ac;
    padding-left: 2px;
    box-sizing: border-box;
    flex: none;
  }
  .srch {
    width: 21px;
    height: 21px;
    margin-left: 7px;
  }
  .usr {
    width: 25px;
    height: 25px;
    margin-left: 11px;
  }
  .login {
    margin-left: 5px;
    width: 36px;
  }
  .c1 {
    margin-left: 87px;
  }
  .cart {
    width: 19px;
    height: 19px;
    margin-left: 18px;
  }
  .a360 {
    width: 22px;
    height: 22px;
    margin-left: 13px;
  }
  .c2 {
    margin-left: 8px;
  }
  .vsep {
    margin-left: 14px;
    width: 1px;
    height: 24px;
    background: #46525d;
  }
  .help {
    margin-left: 12px;
    width: 23px;
    height: 23px;
    line-height: 23px;
    border-radius: 50%;
    background: #d5d8db;
    color: #76808a;
    text-align: center;
    font-size: 16px;
  }
  .c3 {
    margin-left: 9px;
  }
  .minbtn {
    margin-left: 101px;
    margin-top: 13px;
    width: 13px;
    height: 3px;
    background: #e6e8ea;
  }
  .restore {
    width: 18px;
    height: 18px;
    margin-left: 15px;
  }
  .closex {
    width: 18px;
    height: 18px;
    margin-left: 17px;
  }

  /* ribbon tabs */
  .ribbontabs {
    height: 30px;
    display: flex;
    align-items: center;
    gap: 28px;
    padding-left: 19px;
    padding-top: 2px;
    box-sizing: border-box;
    flex: none;
    color: #adb4ba;
  }
  .rt {
    position: relative;
    white-space: nowrap;
    z-index: 0;
  }
  .rt.active {
    color: #eceef0;
  }
  .rt.active::before {
    content: '';
    position: absolute;
    z-index: -1;
    left: -12px;
    right: -13px;
    top: -4px;
    bottom: -4px;
    background: #36424f;
  }
  .rtbox {
    margin-left: 16px;
    width: 22px;
    height: 14px;
    background: #d9dcdf;
    display: flex;
    align-items: center;
    justify-content: center;
  }
  .rtcar {
    margin-left: -19px;
  }

  /* ribbon */
  .ribbon {
    height: 140px;
    display: flex;
    flex: none;
    background: #36424f;
  }
  .panel {
    display: flex;
    flex-direction: column;
    flex: none;
    box-sizing: border-box;
    border-right: 2px solid #222d37;
  }
  .p-draw { width: 298px; }
  .p-mod { width: 272px; }
  .p-ann { width: 177px; }
  .p-lay { width: 355px; }
  .p-blk { width: 113px; }
  .p-prop { width: 282px; }
  .p-grp { width: 96px; }
  .p-utl { width: 107px; }
  .p-clip { width: 107px; }
  .p-view { width: 116px; border-right: 0; }

  .body {
    height: 110px;
    box-sizing: border-box;
    padding-top: 8px;
    display: grid;
    flex: none;
  }
  .ptitle {
    height: 30px;
    display: flex;
    align-items: center;
    justify-content: center;
    gap: 7px;
    color: #b8bec4;
    position: relative;
    box-sizing: border-box;
  }
  .spread {
    padding-right: 20px;
  }
  .p-view .ptitle {
    justify-content: flex-start;
    padding-left: 9px;
  }
  .corner {
    position: absolute;
    right: 2px;
    font-size: 13px;
    color: #aab1b7;
  }
  .p-view .corner {
    right: 34px;
  }

  .big {
    display: flex;
    flex-direction: column;
    align-items: center;
    padding-top: 3px;
    white-space: nowrap;
    line-height: 24px;
  }
  .big > span {
    margin-top: 5px;
  }
  .big > .car {
    margin-top: 4px;
  }
  .big .two {
    line-height: 23px;
  }
  .bigA {
    font: 58px/46px 'Liberation Sans', sans-serif;
    color: #dfe2e5;
    height: 46px;
    margin-top: 0 !important;
  }
  .smalls {
    display: flex;
    flex-direction: column;
  }
  .row {
    height: 33.5px;
    display: flex;
    align-items: center;
    white-space: nowrap;
  }

  .draw {
    padding-left: 5px;
    grid-template-columns: 56px 48px 72px 48px auto;
  }
  .draw .smalls {
    padding-left: 14px;
  }
  .draw .row {
    gap: 13px;
  }

  .mod {
    padding-left: 10px;
    grid-template-columns: 84px 84px 59px auto;
    grid-auto-rows: 33.5px;
  }
  .mod .row {
    gap: 7px;
  }
  .mod .row .car {
    margin-left: 2px;
  }

  .ann {
    padding-left: 8px;
    grid-template-columns: 58px 63px auto;
  }
  .ann .row {
    gap: 8px;
  }

  .lay {
    padding-left: 7px;
    grid-template-columns: 48px auto;
  }
  .laycol {
    margin-left: 5px;
    margin-top: 2px;
  }
  .drop {
    height: 29px;
    width: 190px;
    display: flex;
    align-items: center;
    box-sizing: border-box;
    padding: 0 5px;
    background: #46535f;
    white-space: nowrap;
  }
  .layerdrop {
    width: 291px;
    gap: 4px;
    padding-right: 5px;
  }
  .d {
    width: 22px;
    height: 22px;
    margin-left: 4px;
  }
  .swatch {
    width: 18px;
    height: 18px;
    margin-left: 6px;
    background: #fafafa;
    border: 1px solid #111;
  }
  .dimname {
    margin-left: 5px;
    font-size: 17px;
  }
  .laygrid {
    margin-top: 4px;
    display: grid;
    grid-template-columns: repeat(5, 34.5px);
    grid-auto-rows: 33px;
    align-items: center;
    justify-items: center;
    width: 172px;
  }

  .blk {
    padding-left: 7px;
    grid-template-columns: 48px auto;
  }
  .blk .smalls {
    padding-left: 9px;
    margin-top: -1px;
  }
  .blk .row {
    gap: 10px;
  }

  .prop {
    padding-left: 6px;
    grid-template-columns: 50px 32px auto;
  }
  .prop .smalls {
    align-items: center;
  }
  .propcol {
    margin-top: 2px;
    display: flex;
    flex-direction: column;
    gap: 5px;
  }
  .big-sw {
    margin-left: 12px;
    width: 21px;
    height: 21px;
    border: 0;
  }
  .bl {
    margin-left: 16px;
  }
  .lineprev {
    width: 90px;
    height: 1px;
    background: #e4e7ea;
    margin-right: 3px;
    margin-left: -1px;
  }

  .grp {
    position: relative;
    padding-left: 8px;
  }
  .grpic {
    height: 46px;
  }
  .grpbox {
    position: absolute;
    left: 61px;
    top: 90px;
    width: 30px;
    height: 16px;
    box-sizing: border-box;
    border: 1px solid #4e7ba3;
  }

  .clip {
    grid-template-columns: 54px auto;
  }
  .clip .smalls {
    padding-left: 22px;
  }

  .vw {
    justify-items: center;
    padding-right: 28px;
  }
  .base {
    width: 46px;
    padding-top: 0;
    height: 46px;
  }

  /* document tabs */
  .doctabs {
    height: 37px;
    display: flex;
    align-items: flex-end;
    flex: none;
    padding-left: 31px;
    gap: 5px;
  }
  .dt {
    width: 170px;
    height: 30px;
    display: flex;
    align-items: center;
    box-sizing: border-box;
    padding-left: 14px;
    background: #2a3641;
    clip-path: polygon(7px 0, calc(100% - 7px) 0, 100% 100%, 0 100%);
    color: #a9b0b6;
  }
  .dt.cur {
    background: #36424f;
    color: #e4e6e8;
    padding-left: 13px;
  }
  .dt b {
    font-weight: 600;
    width: 122px;
  }
  .dtx {
    width: 15px;
    height: 15px;
  }
  .dtplus {
    margin-left: 9px;
    width: 26px;
    height: 24px;
    margin-bottom: 3px;
    line-height: 22px;
    text-align: center;
    font-size: 20px;
    background: #2a3641;
    border-radius: 6px;
    color: #aeb5bb;
  }
  .strip {
    height: 5px;
    background: #2f3e4a;
    flex: none;
  }

  /* viewport */
  .view {
    position: relative;
    height: 697px;
    flex: none;
    background: #202a33;
  }
  .canvas {
    position: absolute;
    inset: 0;
    fill: none;
  }
  .yel {
    stroke: #c9bf3c;
    stroke-width: 2.6;
  }
  .paley {
    stroke: #d2ce85;
  }
  .wht {
    stroke: #dcdfe1;
    stroke-width: 2.2;
  }
  .cross {
    stroke: #dcdfe1;
    stroke-width: 2.2;
  }
  .grn {
    stroke: #27ad27;
    stroke-width: 2.4;
  }
  .dims path {
    stroke: #c9cdd1;
    stroke-width: 2.2;
  }
  .dims polygon {
    fill: #d8dbde;
  }
  .dims text {
    fill: #c4c8cc;
    font: 34px 'Liberation Mono', monospace;
    text-anchor: middle;
    dominant-baseline: central;
  }
  .ucs path,
  .ucs rect {
    stroke: #c4c8cc;
    stroke-width: 2;
  }
  .ucs text {
    fill: #c4c8cc;
    font: 26px 'Open Sans', sans-serif;
    text-anchor: middle;
  }
  .ring {
    stroke: #4a5661;
    stroke-width: 12;
  }
  .cube {
    fill: #c2c5ca;
  }
  .cardinal text {
    fill: #b5bac0;
    font: 18px 'Noto Sans CJK SC', sans-serif;
    text-anchor: middle;
  }
  .cardinal .top {
    fill: #7c828a;
    font-size: 28px;
    font-weight: 300;
  }
  .wcs {
    fill: #8c929b;
  }
  .wcst {
    fill: #b9bdc3;
    font: bold 15px 'Open Sans', sans-serif;
  }
  .wcsd {
    stroke: #a2a7ae;
  }
  .navbg {
    fill: #6d7480;
  }
  .navic {
    stroke: #565d68;
    stroke-width: 1.5;
  }

  .viewlabel {
    position: absolute;
    left: 6px;
    top: 6px;
    color: #c4cad0;
    font-size: 18px;
  }
  .caption {
    position: absolute;
    left: 630px;
    top: -3px;
    margin: 0;
    font: 500 55.5px/58px 'Noto Sans CJK SC', sans-serif;
    color: #e6256f;
    white-space: nowrap;
  }
  .viewbtns {
    position: absolute;
    left: 1837px;
    top: 15px;
    display: flex;
    align-items: center;
  }
  .vmin {
    width: 15px;
    height: 4px;
    background: #e6e8ea;
    margin-top: 6px;
  }
  .vres {
    width: 17px;
    height: 17px;
    margin-left: 12px;
  }
  .vx {
    width: 17px;
    height: 17px;
    margin-left: 14px;
  }

  .history {
    position: absolute;
    left: 477px;
    top: 579px;
    display: flex;
    flex-direction: column;
    align-items: flex-start;
    gap: 7px;
  }
  .hline {
    background: #55606a;
    color: #d2d5d8;
    height: 20px;
    line-height: 20px;
    white-space: pre;
    font: 18.4px/20px 'Noto Sans CJK SC', sans-serif;
    padding-right: 3px;
  }
  .hline .a {
    font: 16px/20px 'Liberation Mono', monospace;
  }

  .cmd {
    position: absolute;
    left: 390px;
    top: 661px;
    display: flex;
    height: 35px;
  }
  .cmdtools {
    width: 76px;
    background: #2c3742;
    display: flex;
    align-items: center;
    box-sizing: border-box;
    padding-left: 4px;
  }
  .grip {
    width: 5px;
    height: 26px;
    background: repeating-linear-gradient(#b9bfc5 0 2px, transparent 2px 4px);
  }
  .cmdx {
    margin-left: 8px;
    font-size: 20px;
    color: #dfe3e7;
  }
  .wr {
    width: 22px;
    height: 22px;
    margin-left: 10px;
  }
  .cmdinput {
    width: 1070px;
    background: #c8cdd3;
    display: flex;
    align-items: center;
    box-sizing: border-box;
    padding: 0 7px;
    color: #7c8690;
    font-size: 17px;
    font-style: italic;
  }
  .pr {
    width: 20px;
    height: 20px;
  }
  .cmdcar {
    margin-left: 5px;
    margin-right: 13px;
    border-top-color: #56616c;
  }
  .endcar {
    margin-left: auto;
    border-bottom-color: #56616c;
  }

  /* layout tabs */
  .layouttabs {
    height: 30px;
    display: flex;
    align-items: flex-start;
    padding-left: 20px;
    border-top: 1px solid #2f3a45;
    box-sizing: border-box;
    flex: none;
  }
  .lt {
    height: 27px;
    line-height: 25px;
    box-sizing: border-box;
    width: 64px;
    background: #1f2a33;
    color: #9aa2a9;
    font-size: 16.5px;
    white-space: nowrap;
    display: flex;
    justify-content: center;
    margin-right: 33px;
  }
  .lt.on {
    background: #2d3945;
    color: #e8eaec;
    margin-right: 14px;
    clip-path: polygon(0 0, 100% 0, 90% 100%, 10% 100%);
  }
  .ltplus {
    font-size: 20px;
    line-height: 23px;
    color: #a9b0b6;
  }

  /* status bar */
  .status {
    height: 38px;
    display: flex;
    align-items: flex-start;
    padding-left: 384px;
    padding-top: 2px;
    box-sizing: border-box;
    flex: none;
  }
  .coords {
    width: 255px;
    height: 34px;
    line-height: 32px;
    box-sizing: border-box;
    padding-right: 9px;
    background: #34414e;
    text-align: right;
    font: 16px/32px Lato, sans-serif;
    white-space: nowrap;
    flex: none;
    color: #c9ced3;
  }
  .seg {
    height: 34px;
    display: flex;
    align-items: center;
    justify-content: center;
    gap: 10px;
    background: #2b3743;
    flex: none;
    box-sizing: border-box;
    padding: 0 3px;
    color: #d2d6da;
  }
  .seg.on {
    background: #4f7ba6;
  }
  .seg.dimon {
    background: #47596b;
  }
  .seg.wide {
    justify-content: flex-start;
    padding: 0 6px;
  }
  .st {
    width: 22px;
    height: 22px;
  }

  /* taskbar */
  .taskbar {
    position: relative;
    height: 67px;
    display: flex;
    align-items: center;
    background: #f2f1ee;
    flex: none;
    color: #333;
    font-size: 16px;
  }
  .tb {
    display: block;
    flex: none;
  }
  .win {
    width: 32px;
    height: 32px;
    margin-left: 823px;
    margin-top: -3px;
  }
  .tbitem {
    height: 100%;
    display: flex;
    flex-direction: column;
    align-items: center;
    box-sizing: border-box;
    padding-top: 19px;
    flex: none;
  }
  .fold {
    margin-left: 29px;
    width: 36px;
  }
  .edge {
    margin-left: 30px;
    width: 30px;
  }
  .cap {
    margin-left: 20px;
    width: 34px;
  }
  .dot {
    width: 7px;
    height: 3px;
    margin-top: 6px;
    background: #8d8d8d;
    border-radius: 2px;
  }
  .acad {
    margin-left: 20px;
    width: 51px;
    background: #faf8f5;
    padding-top: 14px;
    border-radius: 3px;
  }
  .acadA {
    font: bold 38px/40px 'Liberation Sans', sans-serif;
    color: #bb3a36;
  }
  .bar {
    width: 21px;
    height: 3px;
    margin-top: 5px;
    background: #2b8aa3;
    border-radius: 2px;
  }
  .trayup {
    margin-left: 208px;
    width: 9px;
    height: 9px;
    border-left: 2px solid #222;
    border-top: 2px solid #222;
    transform: rotate(45deg);
    margin-top: 6px;
    flex: none;
  }
  .tr {
    height: 26px;
    flex: none;
  }
  .ime {
    font-family: 'Noto Sans CJK SC', sans-serif;
    font-size: 20px;
    color: #333;
    flex: none;
  }
  .en {
    margin-left: 22px;
  }
  .py {
    margin-left: 32px;
  }
  .net {
    width: 22px;
    margin-left: 31px;
  }
  .vol {
    width: 22px;
    margin-left: 15px;
  }
  .clock {
    margin-left: 22px;
    width: 83px;
    display: flex;
    flex-direction: column;
    align-items: flex-end;
    font-size: 15px;
    line-height: 23px;
    white-space: nowrap;
  }
  .moon {
    width: 20px;
    margin-left: 12px;
  }

  /* sticker overlay */
  .sticker {
    position: absolute;
    left: 1526px;
    top: 26px;
    display: flex;
    font: 900 116px/136px 'Noto Sans CJK SC', sans-serif;
    color: #fdfaf4;
    -webkit-text-stroke: 2px #fdfaf4;
    paint-order: stroke fill;
    transform-origin: top left;
    transform: skewX(-10deg) scaleX(1.12);
    text-shadow:
      2px 2px 0 #6a55e3, 4px 4px 0 #6a55e3, 6px 6px 0 #6a55e3, 8px 8px 0 #6a55e3,
      10px 10px 0 #6a55e3, 12px 12px 0 #6f50e2, 14px 14px 0 #7a45e0, 15px 16px 0 #a436dc;
  }
  .sticker span:last-child {
    margin-left: -30px;
    margin-top: 16px;
  }
</style>
